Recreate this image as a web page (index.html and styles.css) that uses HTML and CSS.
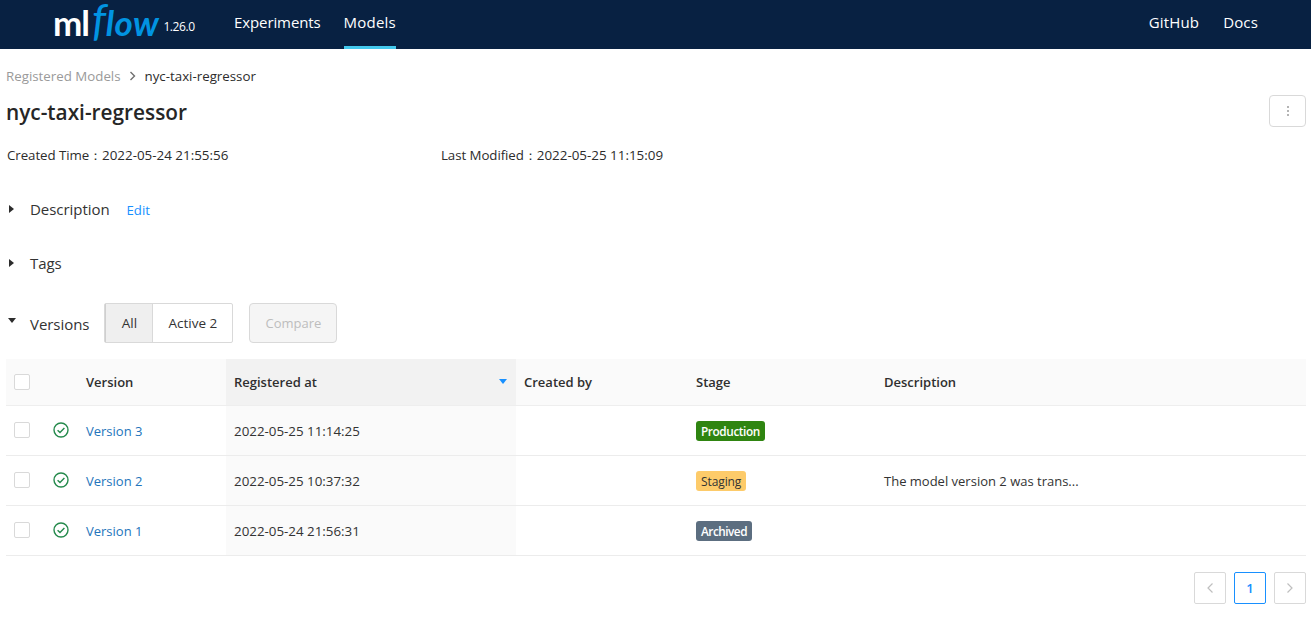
FILE: index.html
```html
<!DOCTYPE html>
<html lang="en">
<head>
<meta charset="utf-8">
<title>nyc-taxi-regressor - MLflow Model</title>
<link rel="stylesheet" href="styles.css">
</head>
<body>
<header class="topbar">
  <div class="brand">
    <span class="logo"><span class="logo-ml">ml</span><span class="logo-f">f</span><span class="logo-flow">low</span></span>
    <span class="release">1.26.0</span>
  </div>
  <nav class="nav-main">
    <a class="nav-link">Experiments</a>
    <a class="nav-link active">Models</a>
  </nav>
  <nav class="nav-side">
    <a class="nav-link">GitHub</a>
    <a class="nav-link">Docs</a>
  </nav>
</header>
<main class="page">
  <div class="crumbs"><span class="crumb-link">Registered Models</span>
    <svg class="crumb-sep" width="8" height="10" viewBox="0 0 8 10"><path d="M1.5 1l4 4-4 4" fill="none" stroke="#6f6f6f" stroke-width="1.4"/></svg>
    <span>nyc-taxi-regressor</span></div>
  <div class="title-row">
    <h1 class="title">nyc-taxi-regressor</h1>
    <button class="more-btn" type="button"><svg width="2" height="12" viewBox="0 0 2 12"><circle cx="1" cy="2" r="0.8" fill="#555"/><circle cx="1" cy="6" r="0.8" fill="#555"/><circle cx="1" cy="10" r="0.8" fill="#555"/></svg></button>
  </div>
  <div class="meta">
    <div class="meta-item"><span class="meta-label">Created Time：</span><span class="meta-val">2022-05-24 21:55:56</span></div>
    <div class="meta-item"><span class="meta-label">Last Modified：</span><span class="meta-val">2022-05-25 11:15:09</span></div>
  </div>
  <section class="section sec-desc">
    <span class="caret right"></span><span class="sec-title">Description</span><a class="edit">Edit</a>
  </section>
  <section class="section sec-tags">
    <span class="caret right"></span><span class="sec-title">Tags</span>
  </section>
  <section class="section sec-versions">
    <span class="caret down"></span><span class="sec-title">Versions</span>
    <div class="radio">
      <span class="radio-btn on">All</span><span class="radio-btn">Active 2</span>
    </div>
    <button class="compare" type="button" disabled>Compare</button>
  </section>
  <table class="versions">
    <colgroup><col class="c1"><col class="c2"><col class="c3"><col class="c4"><col class="c5"><col class="c6"><col class="c7"></colgroup>
    <thead>
      <tr>
        <th><span class="check"></span></th>
        <th></th>
        <th>Version</th>
        <th class="sorted"><div class="sort-cell">Registered at<span class="sort-arrow"></span></div></th>
        <th>Created by</th>
        <th>Stage</th>
        <th>Description</th>
      </tr>
    </thead>
    <tbody>
      <tr>
        <td class="flat"><span class="check"></span></td>
        <td class="flat"><svg class="ok" width="16" height="16" viewBox="0 0 16 16"><circle cx="8" cy="8" r="7" fill="none" stroke="#258a4c" stroke-width="1.4"/><path d="M4.6 8.2l2.4 2.4 4.4-4.6" fill="none" stroke="#258a4c" stroke-width="1.4"/></svg></td>
        <td><a class="ver">Version 3</a></td>
        <td class="sorted">2022-05-25 11:14:25</td>
        <td></td>
        <td><span class="badge prod">Production</span></td>
        <td></td>
      </tr>
      <tr>
        <td class="flat"><span class="check"></span></td>
        <td class="flat"><svg class="ok" width="16" height="16" viewBox="0 0 16 16"><circle cx="8" cy="8" r="7" fill="none" stroke="#258a4c" stroke-width="1.4"/><path d="M4.6 8.2l2.4 2.4 4.4-4.6" fill="none" stroke="#258a4c" stroke-width="1.4"/></svg></td>
        <td><a class="ver">Version 2</a></td>
        <td class="sorted">2022-05-25 10:37:32</td>
        <td></td>
        <td><span class="badge stag">Staging</span></td>
        <td>The model version 2 was trans...</td>
      </tr>
      <tr>
        <td class="flat"><span class="check"></span></td>
        <td class="flat"><svg class="ok" width="16" height="16" viewBox="0 0 16 16"><circle cx="8" cy="8" r="7" fill="none" stroke="#258a4c" stroke-width="1.4"/><path d="M4.6 8.2l2.4 2.4 4.4-4.6" fill="none" stroke="#258a4c" stroke-width="1.4"/></svg></td>
        <td><a class="ver">Version 1</a></td>
        <td class="sorted">2022-05-24 21:56:31</td>
        <td></td>
        <td><span class="badge arch">Archived</span></td>
        <td></td>
      </tr>
    </tbody>
  </table>
  <div class="pager">
    <span class="pg dim"><svg width="8" height="12" viewBox="0 0 8 12"><path d="M6.5 1.5L2 6l4.5 4.5" fill="none" stroke="#bfbfbf" stroke-width="1.2"/></svg></span>
    <span class="pg cur">1</span>
    <span class="pg dim"><svg width="8" height="12" viewBox="0 0 8 12"><path d="M1.5 1.5L6 6l-4.5 4.5" fill="none" stroke="#bfbfbf" stroke-width="1.2"/></svg></span>
  </div>
</main>
</body>
</html>
```

FILE: styles.css
```css
* { box-sizing: border-box; }
html, body { margin: 0; padding: 0; }
body {
  font-family: "Open Sans", "Noto Sans", sans-serif;
  font-size: 13px;
  color: #2c2c2c;
  background: #fff;
  overflow: hidden;
}
.topbar {
  height: 49px;
  background: #082142;
  display: flex;
  align-items: stretch;
  padding-left: 53px;
  padding-right: 53px;
  color: #fff;
}
.brand { display: flex; align-items: flex-start; width: 181px; }
.logo { display: block; line-height: 34px; margin-top: 5px; font-family: "Lato", sans-serif; font-size: 35px; white-space: nowrap; height: 34px; }
.logo-ml { color: #fff; font-weight: 700; letter-spacing: -1px; }
.logo-f { color: #0194e2; font-style: italic; font-weight: 400; font-size: 44px; line-height: 0; margin-left: 3px; letter-spacing: -0.5px; }
.logo-flow { color: #0194e2; font-style: italic; font-weight: 700; letter-spacing: 0.5px; }
.release { font-size: 12px; letter-spacing: -0.4px; margin-left: 4px; margin-top: 18px; }
.nav-main { display: flex; gap: 23px; flex: 1; }
.nav-side { display: flex; gap: 24px; }
.nav-link {
  font-size: 15px;
  line-height: 44px;
  height: 49px;
  color: #fff;
  letter-spacing: -0.1px;
  display: block;
}
.nav-side .nav-link { letter-spacing: 0.15px; }
.nav-link.active { border-bottom: 3px solid #43c9ed; letter-spacing: 0.2px; }
.page { padding: 0 5px 0 6px; }
.crumbs { display: flex; align-items: center; margin-top: 17px; height: 20px; font-size: 13.3px; }
.crumb-link { color: #9a9a9a; }
.crumb-sep { margin: 0 8px 0 8px; }
.title-row { display: flex; justify-content: space-between; align-items: center; margin-top: 9px; height: 32px; }
.title { margin: 2px 0 0; font-size: 20.8px; font-weight: 600; color: #262626; }
.more-btn { width: 37px; height: 32px; background: #fff; border: 1px solid #d9d9d9; border-radius: 4px; padding: 0; display: flex; align-items: center; justify-content: center; }
.meta { display: flex; margin-top: 17px; height: 22px; align-items: center; padding-left: 1px; }
.meta-item { width: 434px; font-size: 13.3px; }
.meta-label { letter-spacing: -0.07px; }
.meta-val { font-size: 13.4px; }
.section { display: flex; align-items: center; }
.sec-desc { margin-top: 31px; height: 24px; }
.sec-tags { margin-top: 30px; height: 24px; }
.sec-versions { margin-top: 28px; height: 40px; }
.caret { display: block; width: 0; height: 0; margin-left: 3px; flex: none; }
.caret.right { border-left: 5px solid #2c2c2c; border-top: 4px solid transparent; border-bottom: 4px solid transparent; }
.caret.down { border-top: 5px solid #2c2c2c; border-left: 4px solid transparent; border-right: 4px solid transparent; margin-top: -6px; margin-left: 2px; }
.sec-title { font-size: 15px; margin-left: 16px; color: #333; letter-spacing: -0.05px; }
.caret.down + .sec-title { margin-left: 14px; margin-top: 1px; }
.edit { color: #1890ff; margin: 1px 0 0 17px; font-size: 13.2px; }
.radio { display: flex; height: 40px; margin-left: 15px; border: 1px solid #d9d9d9; border-radius: 2px; }
.radio-btn { display: flex; align-items: center; justify-content: center; font-size: 13.5px; color: #333; width: 79px; }
.radio-btn.on { width: 48px; background: #efefef; border-left: 1px solid #cfcfcf; border-right: 1px solid #d9d9d9; }
.compare { margin-left: 16px; width: 88px; height: 40px; border: 1px solid #d9d9d9; border-radius: 4px; background: #f5f5f5; color: #bdbdbd; font: inherit; font-size: 13px; }
.versions { width: 1300px; table-layout: fixed; border-collapse: collapse; margin-top: 16px; }
.c1 { width: 40px; } .c2 { width: 32px; } .c3 { width: 148px; } .c4 { width: 290px; } .c5 { width: 172px; } .c6 { width: 188px; }
.versions th { height: 46px; background: #fafafa; font-weight: 600; text-align: left; padding: 0 8px; border-bottom: 1px solid #eee; color: #2f2f2f; font-size: 13px; }
.versions td { height: 50px; padding: 1px 8px 0; border-bottom: 1px solid #ececec; color: #333; }
.versions td.flat { padding: 0 8px; }
.versions th.sorted { background: #f2f2f2; }
.versions td.sorted { background: #fafafa; font-size: 13.35px; }
.sort-cell { display: flex; justify-content: space-between; align-items: center; }
.sort-arrow { width: 0; height: 0; border-top: 5px solid #1890ff; border-left: 4px solid transparent; border-right: 4px solid transparent; margin-right: 1px; }
.check { display: block; width: 16px; height: 16px; border: 1px solid #d9d9d9; border-radius: 2px; background: #fff; }
.ok { display: block; margin-left: -1px; }
.ver { color: #2374bb; }
.badge { display: block; width: fit-content; height: 20px; line-height: 21px; padding: 0 5px; border-radius: 3px; font-size: 11.8px; font-weight: 600; letter-spacing: -0.4px; }
.prod { background: #2f8511; color: #fff; }
.stag { background: #fdcb6a; color: #333; font-size: 12px; font-weight: 400; letter-spacing: -0.1px; }
.arch { background: #5c6e80; color: #fff; letter-spacing: -0.5px; }
.pager { display: flex; justify-content: flex-end; gap: 8px; margin-top: 16px; }
.pg { width: 32px; height: 32px; border: 1px solid #d9d9d9; border-radius: 2px; display: flex; align-items: center; justify-content: center; }
.pg.cur { border-color: #1890ff; color: #1890ff; font-weight: 600; font-size: 13px; }
```
